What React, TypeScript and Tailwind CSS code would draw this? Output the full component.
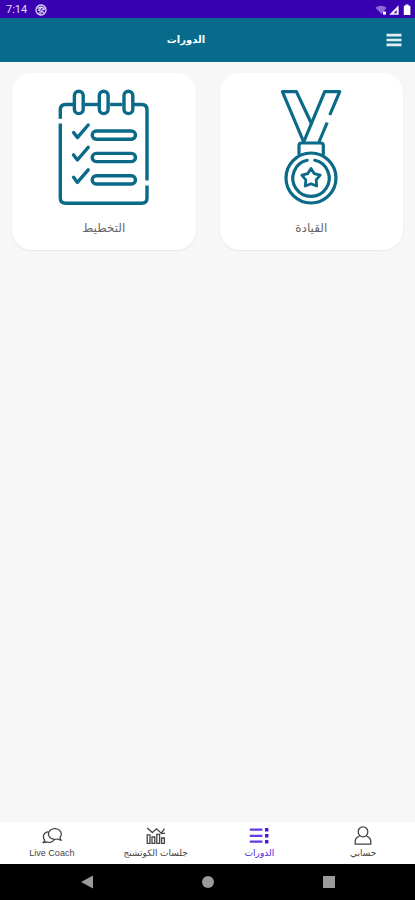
import type { ReactNode } from 'react'

interface Course {
  title: string
  icon: ReactNode
}

interface Tab {
  label: string
  icon: ReactNode
  active?: boolean
}

function MedalIcon() {
  return (
    <svg viewBox="0 0 116 116" className="w-[116px] h-[116px]" fill="none" stroke="#0b6a88" strokeWidth="3.2" strokeLinecap="round" strokeLinejoin="round">
      <path d="M50.7 53 L29.4 2.6 H43.4 L58.4 34.5" />
      <path d="M50.7 53 L71.7 2.6 H86.7 L76.8 26" strokeLinecap="butt" />
      <path d="M74.2 33.5 L66 53" strokeLinecap="butt" />
      <path d="M46 65 V56.5 Q46 54 48.5 54 H67.5 Q70.3 54 70.3 56.5 V65" />
      <circle cx="58" cy="89" r="25" />
      <path d="M54.2 71.3 A18.2 18.2 0 1 0 61.8 71.3" />
      <path d="M58 79.4 L61.2 84.6 L67.2 86.2 L63.2 90.8 L63.7 97 L58 94.8 L52.3 97 L52.8 90.8 L48.8 86.2 L54.8 84.6 Z" strokeWidth="2.8" />
    </svg>
  )
}

function PlannerIcon() {
  return (
    <svg viewBox="0 0 116 116" className="w-[116px] h-[116px]" fill="none" stroke="#0b6a88" strokeWidth="3.4" strokeLinejoin="round">
      <path d="M14.3 29.8 V20.8 Q14.3 15.5 19.6 15.5 H27" />
      <path d="M39 15.5 H52" />
      <path d="M64 15.5 H76.5" />
      <path d="M88 15.5 H95.7 Q101 15.5 101 20.8 V91.5" />
      <path d="M101 96.6 V109 Q101 114.2 95.7 114.2 H19.6 Q14.3 114.2 14.3 109 V34.5" />
      {[28.4, 53.3, 78].map((x) => (
        <rect key={x} x={x} y="2.2" width="8.8" height="22.4" rx="4.4" />
      ))}
      {[0, 22.4, 44.8].map((y) => (
        <g key={y} transform={`translate(0 ${y})`}>
          <path d="M27.6 43.5 L31.4 48.6 L42.2 36" strokeLinecap="round" />
          <rect x="46.2" y="42" width="43.3" height="8.2" rx="4.1" />
        </g>
      ))}
    </svg>
  )
}

function ChatIcon() {
  return (
    <svg viewBox="0 0 20 20" className="w-5 h-5" fill="none" stroke="currentColor" strokeWidth="1.3" strokeLinecap="round" strokeLinejoin="round">
      <path d="M12.8 2.6 C16.5 2.6 19.3 4.9 19.3 8 C19.3 9.4 18.8 10.6 17.9 11.5 L19.2 14.4 L15.6 13 C14.7 13.3 13.8 13.4 12.8 13.4 C9.2 13.4 6.4 11.1 6.4 8 C6.4 4.9 9.2 2.6 12.8 2.6 Z" />
      <path d="M5.8 5.8 C3.2 6.4 1.4 8.3 1.4 10.8 C1.4 12.2 1.9 13.4 2.8 14.3 L1 16.6 L5 16 C6 16.4 7 16.5 8 16.4 C9.9 16.2 11.4 15.3 12.2 13.8" />
    </svg>
  )
}

function StatsIcon() {
  return (
    <svg viewBox="0 0 20 20" className="w-5 h-5" fill="none" stroke="currentColor" strokeWidth="1.3">
      <path d="M1.2 2 L6.4 6.6 L10.4 2.8 L15.4 7.2 L18.4 2.6" />
      <path d="M15 7.4 H19" />
      <path d="M1.2 17.4 V8.8 H4 V17.4 Z M6 17.4 V11 H8.8 V17.4 Z M10.8 17.4 V8.4 H13.6 V17.4 Z M15.6 17.4 V12 H18.4 V17.4 Z" />
    </svg>
  )
}

function ListIcon() {
  return (
    <svg viewBox="0 0 20 20" className="w-5 h-5" fill="currentColor">
      <path d="M0.8 2.6 H13.4 V4.8 H0.8 Z M0.8 8.7 H13.4 V10.9 H0.8 Z M0.8 14.6 H13.4 V16.8 H0.8 Z" opacity="0.85" />
      <path d="M16 2 H19.4 V5.4 H16 Z M16 8.1 H19.4 V11.5 H16 Z M16 14 H19.4 V17.4 H16 Z" />
    </svg>
  )
}

function UserIcon() {
  return (
    <svg viewBox="0 0 20 20" className="w-5 h-5" fill="none" stroke="currentColor" strokeWidth="1.3" strokeLinejoin="round">
      <ellipse cx="10" cy="5.8" rx="4.8" ry="5" />
      <path d="M6.6 10.2 C4 11 2.2 13 2.2 15.8 V18.2 H17.8 V15.8 C17.8 13 16 11 13.4 10.2" />
    </svg>
  )
}

const courses: Course[] = [
  { title: 'القيادة', icon: <MedalIcon /> },
  { title: 'التخطيط', icon: <PlannerIcon /> },
]

const tabs: Tab[] = [
  { label: 'حسابي', icon: <UserIcon /> },
  { label: 'الدورات', icon: <ListIcon />, active: true },
  { label: 'جلسات الكوتشنج', icon: <StatsIcon /> },
  { label: 'Live Coach', icon: <ChatIcon /> },
]

function StatusBar() {
  return (
    <div dir="ltr" className="h-[18px] pl-1.5 pr-1 flex items-center justify-between bg-[#3900b1] text-white">
      <div className="flex items-center gap-2 pt-0.5">
        <span className="font-[Roboto,sans-serif] text-[11px] leading-4 text-[#e4dcf7]">7:14</span>
        <svg viewBox="0 0 12 12" className="w-3 h-3" fill="none" stroke="#e0d8f5" strokeWidth="1.3">
          <circle cx="6" cy="6" r="5" />
          <path d="M2.6 4.6 C5 2.6 7.4 3 9.4 4.8 M3 6 L9 8.6 M6 3.4 L4.2 6.4 M9.6 5.4 L6.4 6.2 M3.6 8.8 L6.4 9.2" />
        </svg>
      </div>
      <div className="flex items-center gap-0.5 pt-0.5">
        <svg viewBox="0 0 12 12" className="w-3 h-3">
          <path d="M0.4 3.8 C3.6 1 8.4 1 11.6 3.8 L6.6 10 Z" fill="#8d6bd6" />
          <path d="M8 7.6 H11 V10.6 H8 Z" fill="#ffffff" />
        </svg>
        <svg viewBox="0 0 10 12" className="w-2.5 h-3">
          <path d="M0.2 10.8 L9.6 1.2 V10.8 Z" fill="#f3effb" />
          <path d="M4.8 9.2 L7.6 6 V9.2 Z" fill="#3900b1" />
        </svg>
        <svg viewBox="0 0 8 12" className="w-2 h-3 ml-0.5" fill="#ffffff">
          <path d="M2.4 0.6 H5.6 V1.8 H7.4 V11 H0.8 V1.8 H2.4 Z" />
        </svg>
      </div>
    </div>
  )
}

function App() {
  return (
    <div dir="rtl" lang="ar" className="min-h-screen flex flex-col bg-[#f7f7f7] font-['DejaVu_Sans',sans-serif]">
      <StatusBar />

      <header className="h-11 flex items-center bg-[#086b8b] text-white">
        <button type="button" aria-label="القائمة" className="w-[43px] h-11 flex items-center justify-center">
          <svg viewBox="0 0 16 14" className="w-4 h-3.5" fill="#e3eef2">
            <path d="M0.5 0.8 H15.5 V3.4 H0.5 Z M0.5 5.7 H15.5 V8.3 H0.5 Z M0.5 10.6 H15.5 V13.2 H0.5 Z" />
          </svg>
        </button>
        <h1 className="flex-1 text-center text-[10px] leading-4 font-bold">الدورات</h1>
      </header>

      <main className="flex-1 px-3 pt-[11px]">
        <div className="grid grid-cols-2 gap-6">
          {courses.map((course) => (
            <a
              key={course.title}
              href="#"
              className="flex flex-col items-center rounded-[20px] bg-white pt-4 pb-3 shadow-[0_1px_2px_rgba(0,0,0,0.07)]"
            >
              {course.icon}
              <span className="mt-3 pt-px text-[12px] leading-5 text-[#666666]">{course.title}</span>
            </a>
          ))}
        </div>
      </main>

      <nav className="h-[42px] grid grid-cols-4 bg-white">
        {tabs.map((tab) => (
          <a
            key={tab.label}
            href="#"
            aria-current={tab.active ? 'page' : undefined}
            className={`flex flex-col items-center pt-1 ${tab.active ? 'text-[#4a17e0]' : 'text-[#444444]'}`}
          >
            {tab.icon}
            <span className="mt-px font-['Liberation_Sans','DejaVu_Sans',sans-serif] text-[9px] leading-3 whitespace-nowrap">
              {tab.label}
            </span>
          </a>
        ))}
      </nav>

      <div dir="ltr" className="h-9 flex items-center justify-center gap-[107px] bg-black text-[#9b9b9b]">
        <button type="button" aria-label="رجوع">
          <svg viewBox="0 0 14 14" className="w-3.5 h-3.5" fill="currentColor">
            <path d="M1 7 L13 0.6 V13.4 Z" />
          </svg>
        </button>
        <button type="button" aria-label="الرئيسية">
          <svg viewBox="0 0 14 14" className="w-3.5 h-3.5" fill="currentColor">
            <circle cx="7" cy="7" r="6" />
          </svg>
        </button>
        <button type="button" aria-label="التطبيقات">
          <svg viewBox="0 0 14 14" className="w-3.5 h-3.5" fill="currentColor">
            <rect x="1" y="1" width="12" height="12" />
          </svg>
        </button>
      </div>
    </div>
  )
}

export default App
